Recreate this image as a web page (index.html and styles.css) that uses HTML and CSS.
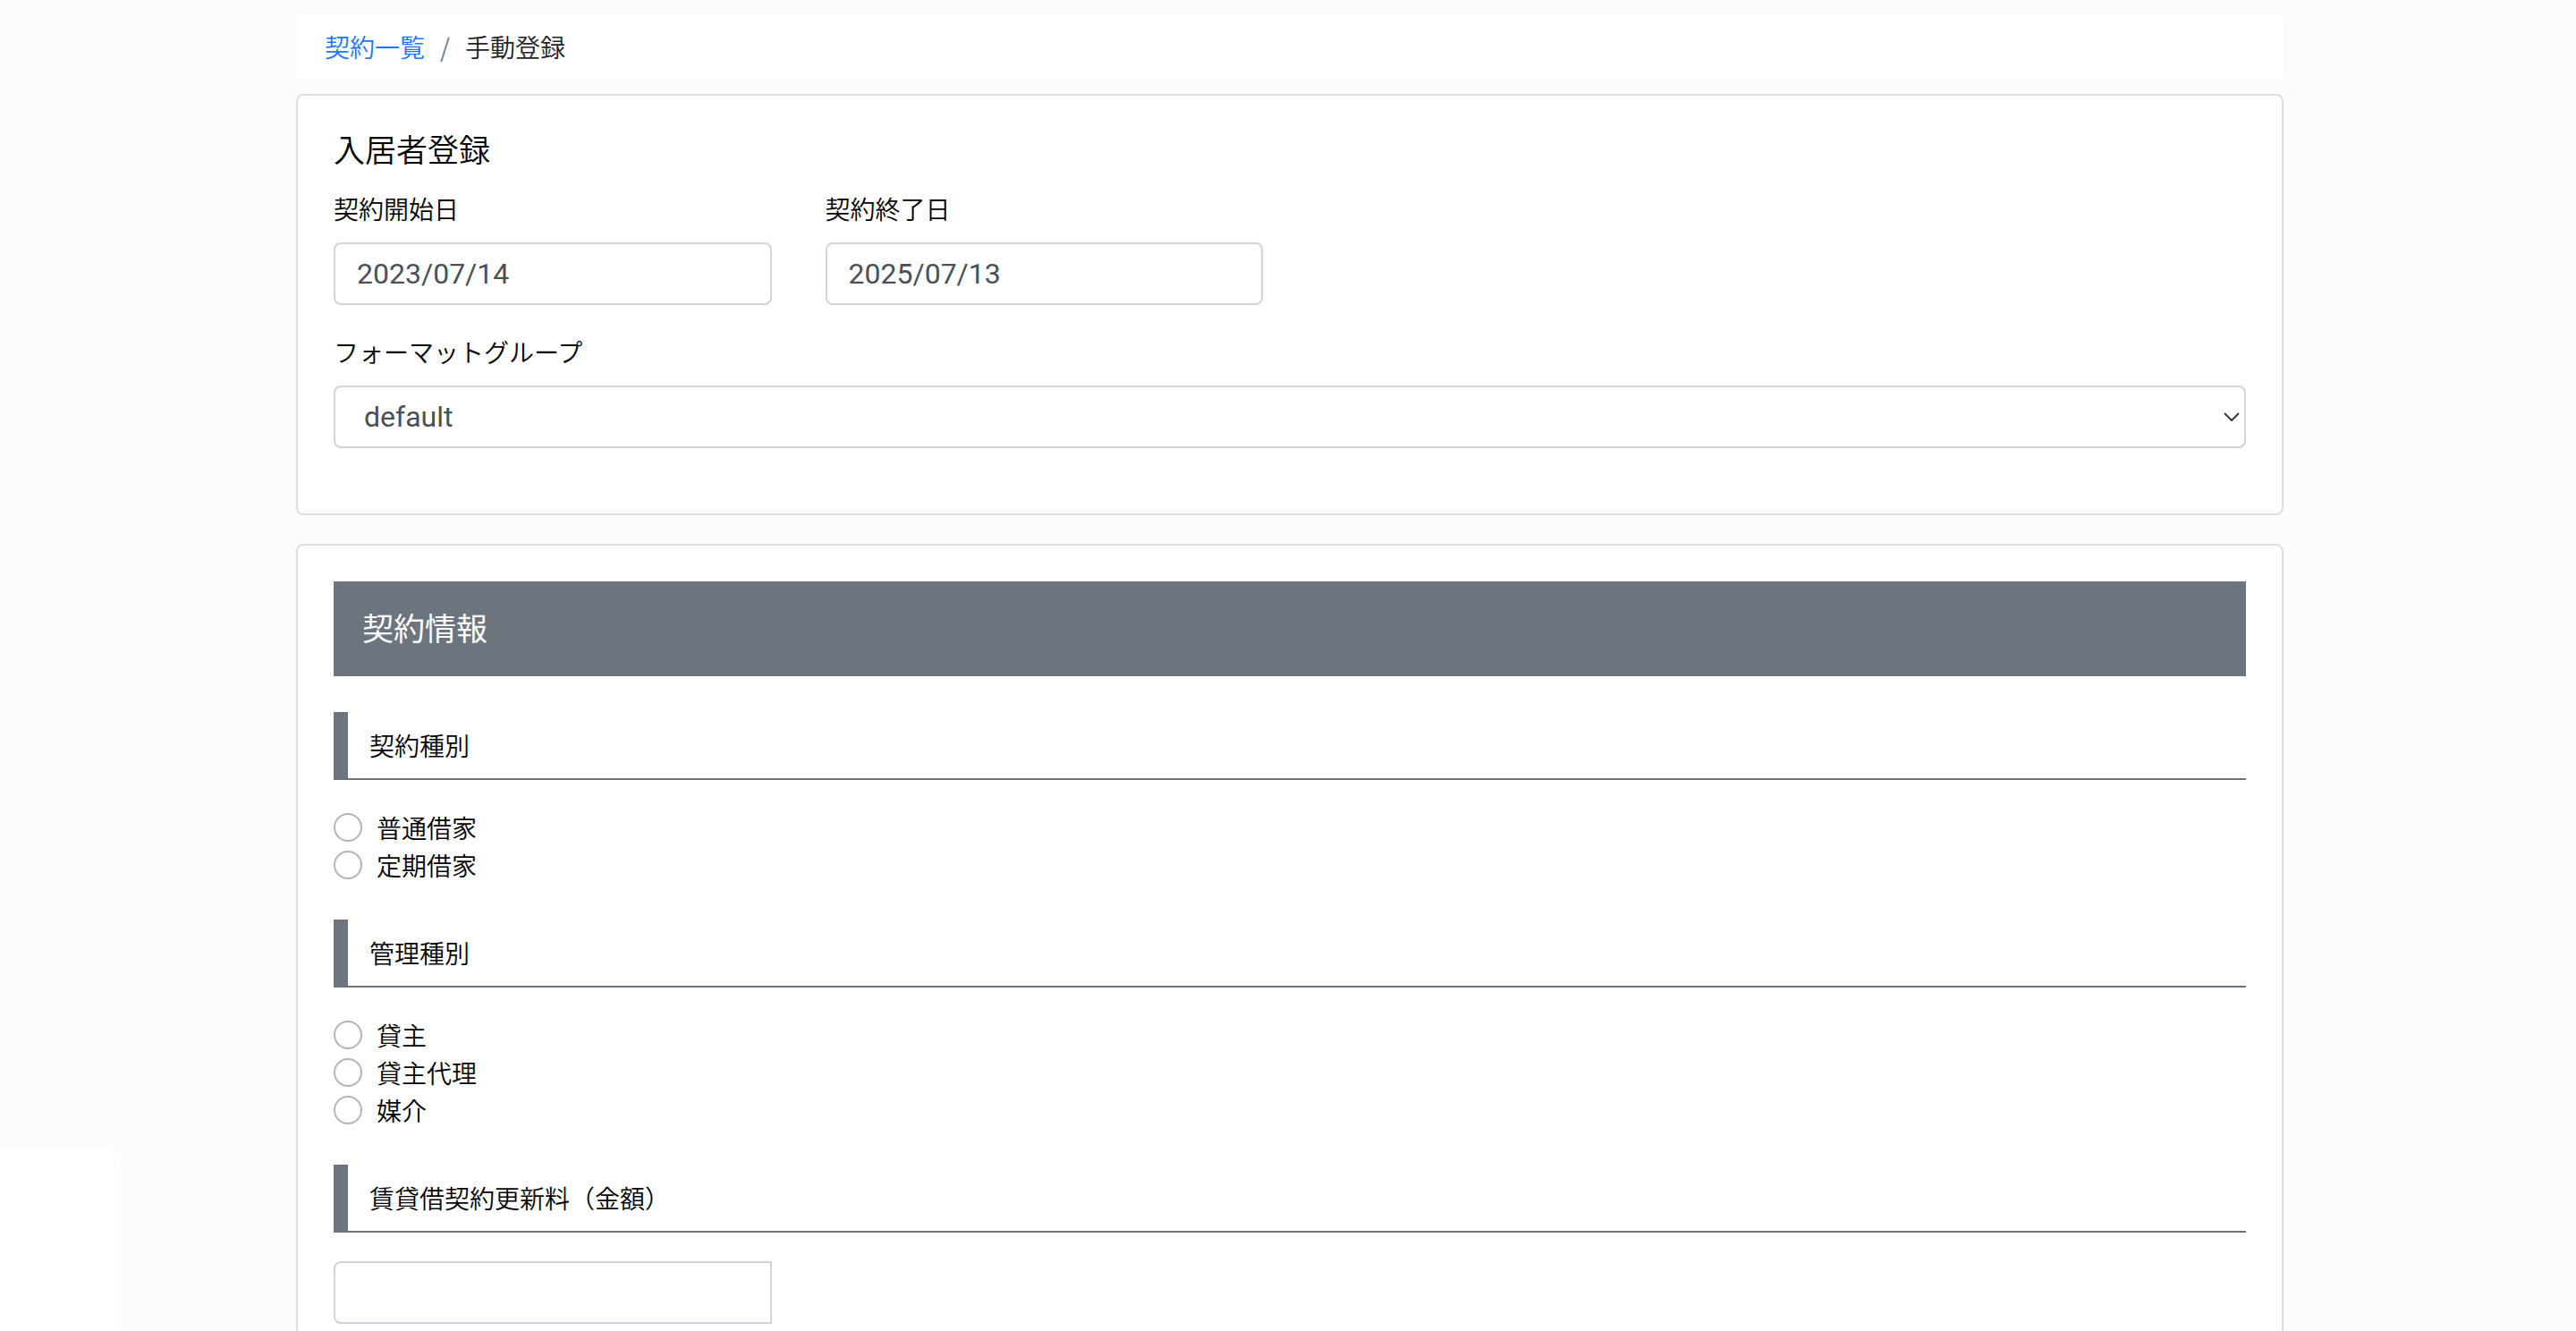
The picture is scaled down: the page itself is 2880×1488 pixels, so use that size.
FILE: index.html
```html
<!DOCTYPE html>
<html lang="ja">
<head>
  <meta charset="UTF-8">
  <meta name="viewport" content="width=device-width, initial-scale=1.0">
  <title>手動登録</title>
  <link rel="stylesheet" href="styles.css">
</head>
<body>

  <div class="container">
    <nav>
      <ol class="breadcrumb">
        <li class="breadcrumb-item"><a href="#">契約一覧</a></li>
        <li class="breadcrumb-item active">手動登録</li>
      </ol>
    </nav>

    <form>
      <!-- 入居者登録 -->
      <div class="card">
        <h1 class="card-title">入居者登録</h1>
        <div class="form-row">
          <div class="form-group">
            <label for="start-date">契約開始日</label>
            <input type="text" id="start-date" class="form-control" value="2023/07/14">
          </div>
          <div class="form-group">
            <label for="end-date">契約終了日</label>
            <input type="text" id="end-date" class="form-control" value="2025/07/13">
          </div>
        </div>
        <div class="form-group">
          <label for="format-group">フォーマットグループ</label>
          <div class="select-wrap">
            <select id="format-group" class="form-control">
              <option value="default">default</option>
            </select>
            <svg class="select-arrow" viewBox="0 0 18 10" aria-hidden="true">
              <path d="M1 1 L9 9 L17 1" fill="none" stroke="#343a40" stroke-width="2"/>
            </svg>
          </div>
        </div>
      </div>

      <!-- 契約情報 -->
      <div class="card">
        <h2 class="section-title">契約情報</h2>

        <h3 class="item-title" id="contract-type">契約種別</h3>
        <div class="radio-list" role="radiogroup" aria-labelledby="contract-type">
          <label class="radio"><input type="radio" name="contract_type" value="1">普通借家</label>
          <label class="radio"><input type="radio" name="contract_type" value="2">定期借家</label>
        </div>

        <h3 class="item-title" id="manage-type">管理種別</h3>
        <div class="radio-list" role="radiogroup" aria-labelledby="manage-type">
          <label class="radio"><input type="radio" name="manage_type" value="1">貸主</label>
          <label class="radio"><input type="radio" name="manage_type" value="2">貸主代理</label>
          <label class="radio"><input type="radio" name="manage_type" value="3">媒介</label>
        </div>

        <h3 class="item-title"><label for="renewal-fee">賃貸借契約更新料（金額）</label></h3>
        <div class="form-row">
          <input type="text" id="renewal-fee" class="form-control joined">
        </div>
      </div>
    </form>
  </div>

  <div class="side-panel"></div>

</body>
</html>
```

FILE: styles.css
```css
* {
  box-sizing: border-box;
}

body {
  margin: 0;
  padding: 15px 0 0 4px;
  height: 100vh;
  overflow: hidden;
  background-color: #fcfcfc;
  font-family: "Noto Sans CJK JP", sans-serif;
  font-size: 28px;
  font-weight: 350;
  line-height: 42px;
  color: #000;
}

.container {
  max-width: 2222px;
  margin: 0 auto;
}

/* Breadcrumb */
.breadcrumb {
  display: flex;
  margin: 0 0 16px;
  padding: 16px 32px;
  list-style: none;
  background-color: #fff;
  border-radius: 8px;
}

.breadcrumb a {
  color: #2176ff;
  text-decoration: none;
}

.breadcrumb-item.active {
  color: #212529;
}

.breadcrumb-item + .breadcrumb-item::before {
  content: "/";
  padding: 0 17px;
  color: #6c757d;
}

/* Cards */
.card {
  margin-bottom: 32px;
  padding: 40px 40px 42px;
  background-color: #fff;
  border: 2px solid #dfdfdf;
  border-radius: 8px;
}

.card-title {
  margin: 0 0 27px;
  font-size: 35px;
  font-weight: 350;
  line-height: 38px;
}

/* Form controls */
.form-row {
  display: grid;
  grid-template-columns: repeat(4, 1fr);
  gap: 60px;
}

.form-group {
  margin-bottom: 31px;
}

.form-group label {
  display: block;
  margin-bottom: 17px;
}

.form-control {
  display: block;
  width: 100%;
  height: 70px;
  padding: 0 24px;
  font-family: Roboto, "Noto Sans CJK JP", sans-serif;
  font-size: 32px;
  font-weight: 400;
  color: #495057;
  background-color: #fff;
  border: 2px solid #ced4da;
  border-radius: 8px;
}

.form-control.joined {
  border-radius: 8px 0 0 8px;
}

.select-wrap {
  position: relative;
}

select.form-control {
  padding: 0 32px;
  appearance: none;
}

.select-arrow {
  position: absolute;
  top: 30px;
  right: 7px;
  width: 18px;
  height: 10px;
  pointer-events: none;
}

/* Section headings */
.section-title {
  margin: 0 0 40px;
  padding: 32px 32px 36px;
  font-size: 35px;
  font-weight: 400;
  line-height: 38px;
  color: #fff;
  background-color: #6c757d;
}

.item-title {
  margin: 0 0 32px;
  padding: 16px 24px;
  font-size: 28px;
  font-weight: 350;
  line-height: 42px;
  border-left: 16px solid #6c757d;
  border-bottom: 2px solid #6c757d;
}

/* Radios */
.radio-list {
  margin-bottom: 40px;
}

.radio {
  display: flex;
  align-items: center;
  gap: 16px;
}

.radio input {
  width: 32px;
  height: 32px;
  margin: 0;
  appearance: none;
  background-color: #fff;
  border: 2px solid #adb5bd;
  border-radius: 50%;
}

.radio input:checked {
  border: 10px solid #2176ff;
}

/* Panel at the bottom left of the window */
.side-panel {
  position: fixed;
  left: 0;
  bottom: -16px;
  width: 135px;
  height: 221px;
  background-color: #fff;
  border-radius: 0 20px 20px 0;
}
```
